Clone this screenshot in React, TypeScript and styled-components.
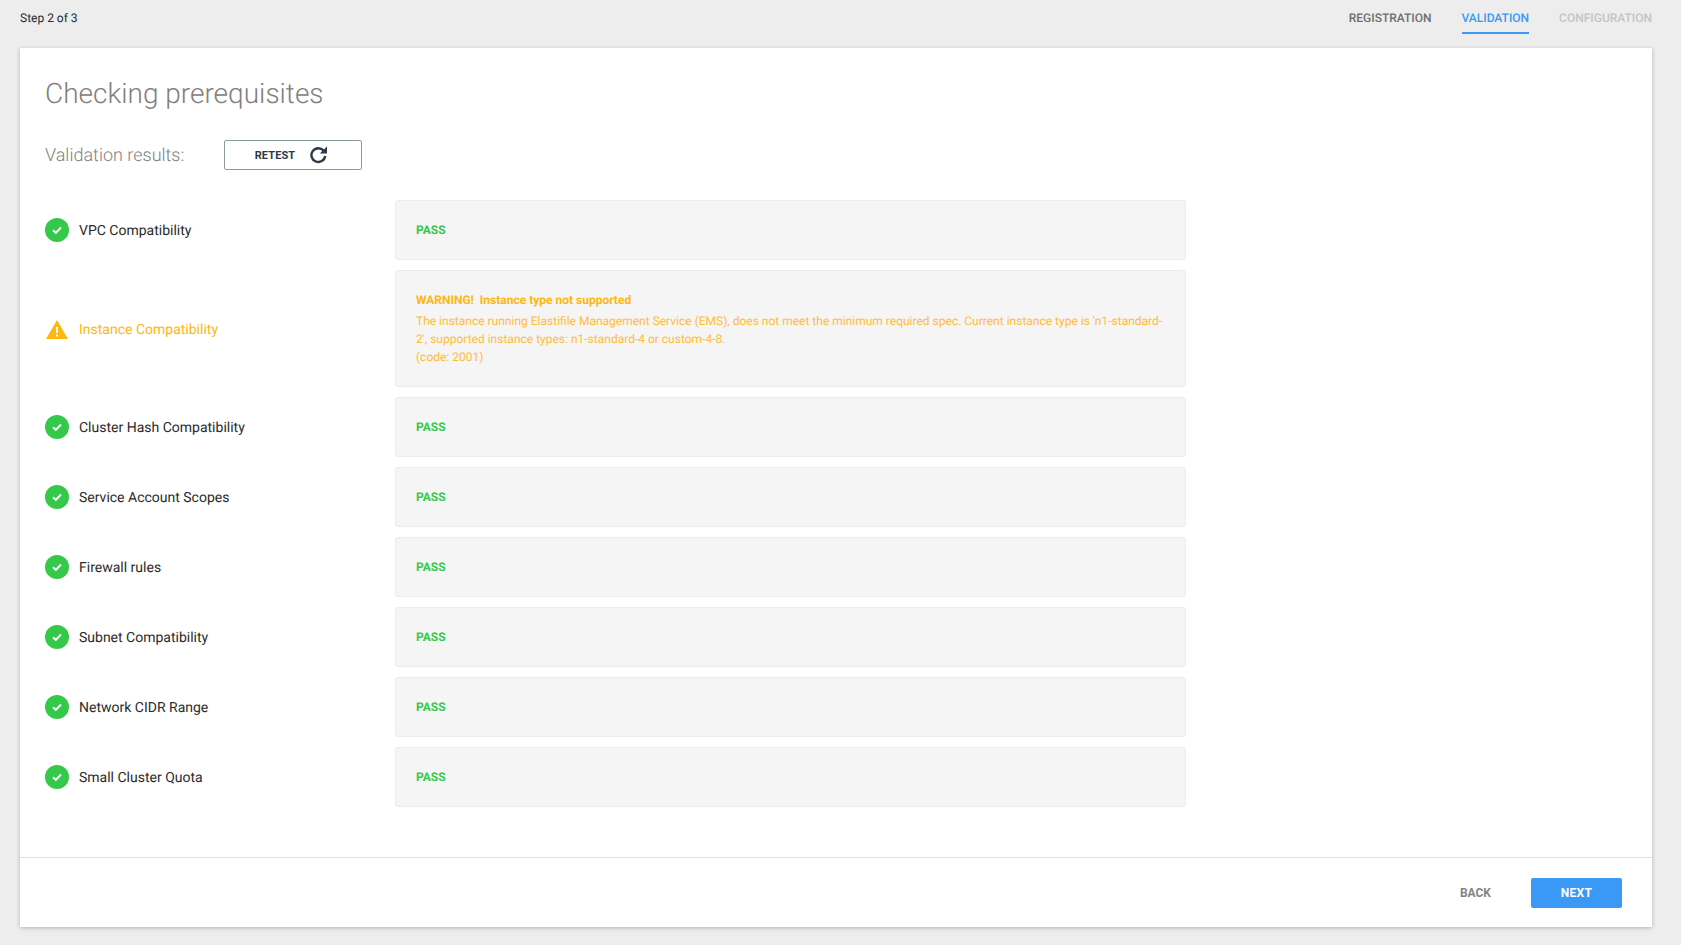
import React from "react";
import styled, { createGlobalStyle } from "styled-components";

const Global = createGlobalStyle`
  html, body { margin: 0; padding: 0; height: 100%; background: #ededed; }
  body { font-family: Roboto, "Liberation Sans", sans-serif; text-rendering: geometricPrecision; }
  * { box-sizing: border-box; }
`;

const Page = styled.div`
  width: 1681px;
  height: 945px;
  padding: 0 29px 18px 20px;
  display: flex;
  flex-direction: column;
  background: #ededed;
  overflow: hidden;
`;

const TopBar = styled.header`
  height: 48px;
  flex: none;
  display: flex;
  justify-content: space-between;
`;

const StepLabel = styled.div`
  font-size: 12px;
  line-height: 14px;
  padding-top: 11px;
  color: #222b33;
`;

const Tabs = styled.nav`
  display: flex;
  gap: 30px;
`;

const Tab = styled.div<{ $state: "done" | "active" | "todo" }>`
  height: 34px;
  padding-top: 11px;
  font-size: 12px;
  line-height: 14px;
  font-weight: 500;
  color: ${(p) => (p.$state === "done" ? "#6f6f6f" : p.$state === "active" ? "#3a99f6" : "#c4c4c4")};
  border-bottom: 2px solid ${(p) => (p.$state === "active" ? "#3a99f6" : "transparent")};
`;

const Card = styled.main`
  flex: 1;
  display: flex;
  flex-direction: column;
  background: #fff;
  box-shadow: 0 1px 4px rgba(0, 0, 0, 0.25);
`;

const Body = styled.section`
  flex: 1;
  padding: 29px 25px 0;
`;

const Title = styled.h1`
  margin: 0;
  font-size: 28px;
  line-height: 33px;
  font-weight: 300;
  color: #808080;
`;

const ResultsHeader = styled.div`
  display: flex;
  align-items: flex-start;
  margin-top: 30px;
  height: 31px;
`;

const ResultsLabel = styled.div`
  width: 179px;
  font-size: 18px;
  line-height: 31px;
  font-weight: 300;
  color: #808080;
`;

const RetestButton = styled.button`
  width: 138px;
  height: 30px;
  padding: 0 4px 0 0;
  display: flex;
  align-items: center;
  justify-content: center;
  gap: 15px;
  background: #fff;
  border: 1px solid #8a9a9f;
  border-radius: 2px;
  font-family: inherit;
  font-size: 11px;
  font-weight: 700;
  letter-spacing: 0.1px;
  color: #2a3a4a;
`;

const Rows = styled.div`
  margin-top: 29px;
  display: flex;
  flex-direction: column;
  gap: 10px;
`;

const Row = styled.div`
  display: flex;
  align-items: center;
`;

const RowName = styled.div<{ $warn?: boolean }>`
  width: 350px;
  flex: none;
  display: flex;
  align-items: center;
  gap: 10px;
  font-size: 14px;
  line-height: 24px;
  color: ${(p) => (p.$warn ? "#ffb70f" : "#2b2b2b")};
`;

const RowLabel = styled.span`
  margin-top: 2px;
`;

const IconSlot = styled.span`
  width: 24px;
  height: 24px;
  flex: none;
  display: block;
`;

const ResultBox = styled.div`
  width: 791px;
  min-height: 60px;
  padding: 0 20px;
  display: flex;
  flex-direction: column;
  justify-content: center;
  background: #f5f5f5;
  border: 1px solid #ececec;
  border-radius: 3px;
  font-size: 12px;
`;

const Pass = styled.div`
  font-weight: 700;
  color: #35c94a;
`;

const WarningBox = styled(ResultBox)`
  height: 117px;
  color: #ffbd35;
  line-height: 18px;
`;

const WarningTitle = styled.div`
  font-weight: 700;
  color: #ffb70f;
  margin-bottom: 3px;
  white-space: pre;
`;

const Footer = styled.footer`
  height: 70px;
  flex: none;
  display: flex;
  align-items: center;
  justify-content: flex-end;
  gap: 40px;
  padding-right: 30px;
  border-top: 1px solid #dedede;
`;

const BackButton = styled.button`
  border: 0;
  padding: 0;
  background: none;
  font-family: inherit;
  font-size: 12px;
  font-weight: 700;
  color: #858585;
`;

const NextButton = styled.button`
  width: 91px;
  height: 30px;
  border: 0;
  padding: 0;
  border-radius: 2px;
  background: #3a99f6;
  font-family: inherit;
  font-size: 12px;
  font-weight: 700;
  letter-spacing: 0.3px;
  color: #fff;
`;

const CheckIcon = () => (
  <IconSlot>
    <svg width="24" height="24" viewBox="0 0 24 24">
      <circle cx="12" cy="12" r="12" fill="#35c94a" />
      <path d="M8 12.2l2.8 2.6 5.2-5.3" fill="none" stroke="#fff" strokeWidth="1.9" />
    </svg>
  </IconSlot>
);

const WarnIcon = () => (
  <IconSlot>
    <svg width="24" height="24" viewBox="0 0 24 24">
      <path d="M12 3L23 22H1z" fill="#ffb70f" />
      <rect x="11" y="10" width="2" height="6" fill="#fff" />
      <rect x="11" y="17.5" width="2" height="2" fill="#fff" />
    </svg>
  </IconSlot>
);

const RefreshIcon = () => (
  <svg width="17" height="18" viewBox="0 0 17 18">
    <path d="M13.6 4.6A6.9 6.9 0 1 0 15.2 10" fill="none" stroke="#2a3a4a" strokeWidth="2.4" />
    <path d="M9.8 7.6H17V.6z" fill="#2a3a4a" />
  </svg>
);

const names = [
  "Cluster Hash Compatibility",
  "Service Account Scopes",
  "Firewall rules",
  "Subnet Compatibility",
  "Network CIDR Range",
  "Small Cluster Quota",
];

const PassRow = ({ name }: { name: string }) => (
  <Row>
    <RowName>
      <CheckIcon />
      <RowLabel>{name}</RowLabel>
    </RowName>
    <ResultBox>
      <Pass>PASS</Pass>
    </ResultBox>
  </Row>
);

export default function App() {
  return (
    <Page>
      <Global />
      <TopBar>
        <StepLabel>Step 2 of 3</StepLabel>
        <Tabs>
          <Tab $state="done">REGISTRATION</Tab>
          <Tab $state="active">VALIDATION</Tab>
          <Tab $state="todo">CONFIGURATION</Tab>
        </Tabs>
      </TopBar>
      <Card>
        <Body>
          <Title>Checking prerequisites</Title>
          <ResultsHeader>
            <ResultsLabel>Validation results:</ResultsLabel>
            <RetestButton>
              RETEST
              <RefreshIcon />
            </RetestButton>
          </ResultsHeader>
          <Rows>
            <PassRow name="VPC Compatibility" />
            <Row>
              <RowName $warn>
                <WarnIcon />
                <RowLabel>Instance Compatibility</RowLabel>
              </RowName>
              <WarningBox>
                <WarningTitle>{"WARNING!  Instance type not supported"}</WarningTitle>
                <div>
                  The instance running Elastifile Management Service (EMS), does not meet the minimum required spec. Current instance type is 'n1-standard-2', supported instance types: n1-standard-4 or custom-4-8.
                </div>
                <div>(code: 2001)</div>
              </WarningBox>
            </Row>
            {names.map((n) => (
              <PassRow key={n} name={n} />
            ))}
          </Rows>
        </Body>
        <Footer>
          <BackButton>BACK</BackButton>
          <NextButton>NEXT</NextButton>
        </Footer>
      </Card>
    </Page>
  );
}
